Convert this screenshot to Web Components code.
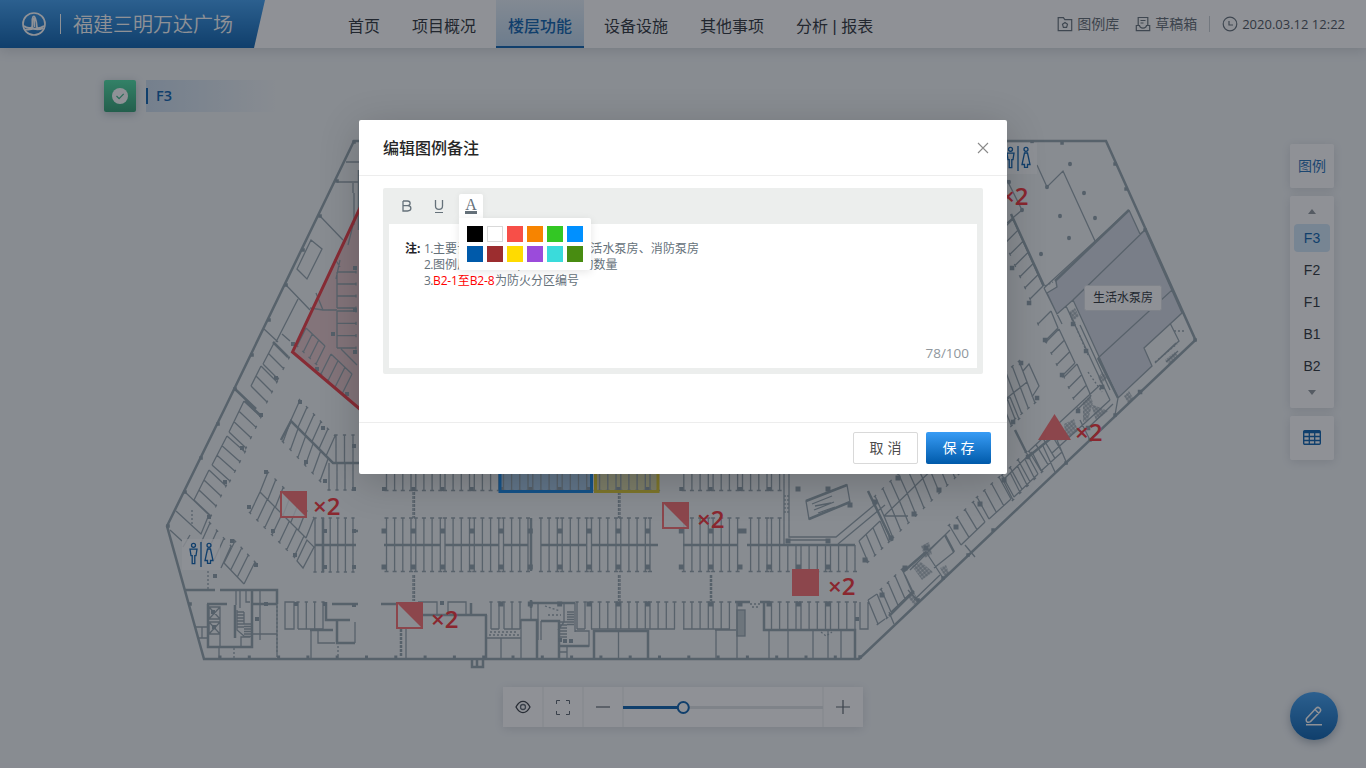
<!DOCTYPE html>
<html lang="zh-CN">
<head>
<meta charset="utf-8">
<title>福建三明万达广场</title>
<style>
html,body{margin:0;height:100%;overflow:hidden}
body{font-family:"Noto Sans CJK SC",sans-serif;color:#30363d}
</style>
</head>
<body>
<floor-app></floor-app>
<script>
const define = (name, html, setup) => {
  const tpl = document.createElement('template');
  tpl.innerHTML = html;
  customElements.define(name, class extends HTMLElement {
    constructor() {
      super();
      this.attachShadow({ mode: 'open' }).appendChild(tpl.content.cloneNode(true));
    }
    connectedCallback() { if (setup) setup(this.shadowRoot, this); }
  });
};

define('brand-title', `<style>
:host{display:flex;align-items:center;box-sizing:border-box;width:265px;height:48px;padding-left:22px;color:#fff;
 background:linear-gradient(#389cf0,#005aaa);clip-path:polygon(0 0,265px 0,254px 48px,0 48px)}
i{width:1px;height:20px;background:#fff;margin:0 12px 0 14px}
span{font-size:20px;line-height:48px;font-weight:350;height:48px}
</style>
<svg width="24" height="24" viewBox="0 0 24 24" fill="none" stroke="#fff" stroke-width="1.7"><circle cx="12" cy="12" r="11"/><path d="M2 14c3 2.500 5 2 7.500 1.500 2 0 2 1.500 3.500 1s5 .5 9-2.500M3 17.500c3 .8 5-.5 8-.5s6 1.500 10-1M10 15.500c1-4.500-.5-8 1-10.500s3.500 3 4 10.500M12 6l.5 9"/></svg>
<i></i><span><slot></slot></span>`);

define('nav-item', `<style>
:host{display:block;box-sizing:border-box;height:48px;padding:0 12px;font:16px/54px "Liberation Sans","Noto Sans CJK SC",sans-serif;white-space:nowrap;color:#252b31}
:host([active]){background:linear-gradient(#e6f0f8,#bad5ec);border-bottom:2px solid #005aaa;color:#005aaa;font-weight:500}
</style><slot></slot>`);

define('status-link', `<style>
:host{display:flex;align-items:center;gap:4px;height:20px;font:14px/18px "Noto Sans CJK SC",sans-serif;color:#5b646c}
:host([latin]){font:13px/20px "Open Sans",sans-serif;color:#454d55}
::slotted(svg){width:16px;height:16px;fill:none;stroke:#5f6b74;stroke-width:1.2}
.t{height:20px}
</style><slot name="icon"></slot><div class="t"><slot></slot></div>`);

define('app-header', `<style>
:host{display:flex;height:48px;background:#fff;box-shadow:0 2px 12px rgba(0,20,40,.16);position:relative}
nav{display:flex;gap:8px;margin-left:71px}
.right{display:flex;align-items:center;margin-left:auto;padding-right:21px}
.right>*+*{margin-left:16px}
.right>i{width:1px;height:16px;background:#c7ccd0;margin:0 -4px 0 12px}
</style>
<brand-title>福建三明万达广场</brand-title>
<nav><nav-item>首页</nav-item><nav-item>项目概况</nav-item><nav-item active>楼层功能</nav-item><nav-item>设备设施</nav-item><nav-item>其他事项</nav-item><nav-item>分析 | 报表</nav-item></nav>
<div class="right">
<status-link><svg slot="icon" viewBox="0 0 16 16"><path d="M1.2 1.7h5.2l1.4 2h6.9v11H1.2z"/><path d="M8 6.400l2.500 1.900-.9 3H6.400l-.9-3z"/></svg>图例库</status-link>
<status-link><svg slot="icon" viewBox="0 0 16 16"><path d="M3.200 9V1.500h9.600V9M5.500 4.500h5M5.500 7h3M1.300 14.600V9.500h3.200c.4 3.500 6.600 3.500 7 0h3.200v5.100z"/></svg>草稿箱</status-link>
<i></i>
<status-link latin><svg slot="icon" viewBox="0 0 16 16"><circle cx="8" cy="8" r="6.800"/><path d="M7 5v4h4"/></svg>2020.03.12 12:22</status-link>
</div>`);

define('floor-crumb', `<style>
:host{display:flex;align-items:center;gap:10px}
b{display:grid;place-items:center;width:32px;height:32px;border-radius:2px;background:linear-gradient(#46dfa0,#289a6c);box-shadow:0 2px 8px rgba(0,30,50,.25)}
p{display:flex;align-items:center;gap:8px;margin:0;width:130px;height:32px;background:linear-gradient(90deg,#cadced,rgba(220,230,240,0));color:#005aaa;font:600 14.500px/32px "Open Sans",sans-serif}
p:before{content:"";width:2px;height:16px;background:#005aaa}
</style>
<b><svg width="16" height="16"><circle cx="8" cy="8" r="8" fill="#fff"/><path d="M4.500 8l2.600 2.600 4.600-4.700" fill="none" stroke="#37b584" stroke-width="1.300"/></svg></b><p><slot></slot></p>`);

define('side-card', `<style>
:host{display:flex;flex-direction:column;align-items:center;justify-content:center;box-sizing:border-box;width:44px;min-height:44px;background:#fff;border-radius:2px;box-shadow:0 2px 10px rgba(0,20,40,.12);font-size:14px;color:#1668b3}
:host([label]){padding-bottom:2px}
</style><slot></slot>`);

define('floor-list', `<style>
:host{display:flex;flex-direction:column;align-items:center;gap:4px;padding:12px 0;font:14px/28px "Liberation Sans",sans-serif;color:#252b31}
span{width:36px;height:28px;text-align:center;border-radius:4px}
.on{background:#cfe6f8;color:#005aaa}
svg{width:8px;height:8px;fill:#8a9299}svg:first-of-type{margin-bottom:4px}svg:last-of-type{margin-top:4px}
</style>
<svg viewBox="0 0 8 8"><path d="M0 6l4-5 4 5z"/></svg><span class="on">F3</span><span>F2</span><span>F1</span><span>B1</span><span>B2</span><svg viewBox="0 0 8 8"><path d="M0 2l4 5 4-5z"/></svg>`);

define('zoom-bar', `<style>
:host{display:grid;grid-template-columns:39px 38px 38px 198px 39px;width:360px;height:40px;gap:2px;border-radius:2px;background:#f2f4f5}
div{background:#fff;display:grid;place-items:center}
.track{justify-content:start}.track svg{margin-left:-1px}
div:last-child svg{margin-right:1px}div:first-child svg{margin-left:1px}
svg{fill:none;stroke:#555f68}
</style>
<div><svg width="16" height="14" viewBox="0 0 16 14" stroke-width="1.300"><path d="M1 7c4-7.500 10-7.500 14 0-4 7.500-10 7.500-14 0z" stroke="#30363d"/><circle cx="8" cy="7" r="2.500"/></svg></div>
<div><svg width="16" height="16" viewBox="0 0 16 16"><path d="M1.500 5V1.500H5M11 1.500h3.500V5M14.500 12v3.500H11M5 15.500H1.500V12"/></svg></div>
<div><svg width="14" height="2"><path d="M0 1h14" stroke-width="1.200"/></svg></div>
<div class="track"><svg width="200" height="16"><path d="M0 8.500h200" stroke="#dfe2e4" stroke-width="3"/><path d="M0 8.500h60" stroke="#005aaa" stroke-width="3"/><circle cx="60.300" cy="8.500" r="5.500" fill="#fff" stroke="#005aaa" stroke-width="2"/></svg></div>
<div><svg width="14" height="14"><path d="M0 7h14M7 0v14" stroke-width="1.200"/></svg></div>`);

define('round-action', `<style>
:host{display:grid;place-items:center;width:48px;height:48px;border-radius:50%;background:linear-gradient(#389cf0,#005aaa);box-shadow:0 3px 8px rgba(0,30,60,.3)}
</style><svg width="18" height="20" viewBox="0 0 18 20" fill="none" stroke="#fff" stroke-width="1.500"><path d="M1.500 12.500L11 2.200c2.500-2.200 6 1 4 3.600L5.500 15.600c-3 1.500-5 .3-4-3.100zM10 3.500l4 4M1 18.700h16"/></svg>`);

/* ---- floor plan, drawn in page coordinates ---- */
define('floor-plan', `<style>
:host{display:block;width:1366px;height:768px}
svg{display:block}
.w{fill:none;stroke:#90a0a8;stroke-width:1.3}.h{fill:none;stroke:#8fa0a8;stroke-width:2.500}
.p{fill:#8b9da6}.mk{fill:#f9686a}.n{font:600 24px "Open Sans",sans-serif;fill:#f52a30}
.lb{font:12px "Noto Sans CJK SC",sans-serif;fill:#252b31}
</style>
<svg width="1366" height="768" viewBox="0 0 1366 768">
<defs>
<g id="wc"><rect width="38" height="31" fill="#fff" fill-opacity=".75"/><g fill="none" stroke="#005aaa" stroke-width="1.300"><circle cx="11.500" cy="6.300" r="2"/><path d="M8 10.200h7l-1 6.500h-1.200v8h-2.600v-8H9zM19 3v25"/><circle cx="27" cy="6.300" r="2"/><path d="M25.500 10h3l2.500 11.500h-2.500v2.800h-3v-2.800H23z"/></g></g>
<g id="half"><rect x="1" y="1" width="25" height="25" fill="#f5f6f8" fill-opacity=".8" stroke="#f9686a" stroke-width="2"/><path d="M0 0h27v27z" class="mk"/></g>
<pattern id="hatch" width="3" height="3" patternUnits="userSpaceOnUse" patternTransform="rotate(-40)"><path d="M0 1h3M1 0v3" stroke="#8e9da5" stroke-width="1"/></pattern>
</defs>
<path d="M1129 210L1140 234L1145 230L1182 313L1144 348L1152 366L1118 398L1073 300L1057 314L1047 293L1056 287L1055 281Z" fill="#d3d8e2"/>
<path d="M499 440H592V492H499Z" fill="#a5c8e6"/><path d="M595 440H658V492H595Z" fill="#dbd8a4"/>
<path d="M292 352L375 176L420 460Z" fill="#e4b8bc" fill-opacity=".8"/>
<g id="plan"></g>
<path d="M500 440V491.500H591.500V440" fill="none" stroke="#0a82e6" stroke-width="3"/><path d="M595.500 440V491.500H658V440" fill="none" stroke="#dcc828" stroke-width="3"/>
<path d="M375 176L292.500 352L420 460" fill="none" stroke="#ee343c" stroke-width="3"/>
<use href="#half" x="280" y="491"/><use href="#half" x="662" y="502"/><use href="#half" x="396" y="602"/>
<rect x="792" y="569" width="27" height="27" class="mk"/><path d="M1054.500 414L1071 440H1038Z" class="mk"/>
<use href="#wc" x="182" y="539"/><use href="#wc" x="999" y="143"/>
<g class="n"><text x="313" y="515">×2</text><text x="697" y="528">×2</text><text x="828" y="595">×2</text><text x="431" y="628">×2</text><text x="1075" y="441">×2</text><text x="1001" y="205">×2</text></g>
<rect x="1084.500" y="285.500" width="77" height="25" rx="2" fill="#fff" stroke="#dfe2e6"/><text x="1093" y="302" class="lb">生活水泵房</text>
</svg>`, root => {
  let W = '', H = '', P = '', extra = '';
  const f = v => v.toFixed(1);
  const ln = (x, y, u, v) => { W += `M${f(x)} ${f(y)}L${f(u)} ${f(v)}`; };
  const poly = s => { W += s; }, heavy = s => { H += s; };
  const dot = (x, y, s = 4) => { P += `M${f(x - s / 2)} ${f(y - s / 2)}h${s}v${s}h${-s}z`; };
  const comb = (ax, ay, bx, by, n, dx, dy, spine = true) => {
    const ux = (bx - ax) / n, uy = (by - ay) / n, L = Math.hypot(ux, uy);
    if (spine) ln(ax, ay, bx, by);
    for (let i = 0; i <= n; i++) {
      const x = ax + ux * i, y = ay + uy * i;
      ln(x, y, x + dx, y + dy);
      ln(x + dx - ux / L * 1.600, y + dy - uy / L * 1.600, x + dx + ux / L * 1.600, y + dy + uy / L * 1.600);
    }
  };
  const bays = (pillars, x0, x1, y0, y1, ticks) => {
    for (const p of pillars) for (const o of [2.500, 10.600, 18.800, 27]) {
      const x = p + o;
      if (x < x0 || x > x1) continue;
      ln(x, y0, x, y1);
      for (const t of ticks) ln(x - 2, t, x + 2, t);
    }
  };
  // perimeter
  heavy('M354 141H1106L1195.500 340L859 659H204L167 526L224 410Z');
  for (let x = 220; x < 850; x += 29.300) dot(x, 657, 3);
  for (const [x, y] of [[354,142],[337,181],[320,216],[303,250],[286,285],[269,320],[252,355],[235,389],[218,424],[201,458],[185,492],[168,526],[190,604],[1115,164],[1126,189],[1145,230],[1195,340],[1115,415],[1090,440],[1066,463],[993,530],[968,555],[943,578],[918,600],[860,657],[1062,143],[1032,142]]) dot(x, y, 3.500);
  // west wing
  poly('M346 162H359M337 182H359M354 193V225M320 216L343 240M311 240L322 249L307 279L297 269ZM286 285L310 310M298 299L276 342M264 329L278 342M282 334L290 341M335 259L340 267M245 401L262 417M185 492L209 515M176 511L201 534L208 517M170 530L182 541M190 535L183 547M316 293L323 310H337M353 225L348 245M353 193v-10');
  heavy('M273 342L288 357M235 389L256 409M245 401L260 415M359 170v60');
  comb(274,343,263,364,2,15,15); comb(261,366,251,386,2,16,16);
  comb(244,401,229,432,3,17,16); comb(227,436,212,465,3,18,16); comb(209,470,194,500,3,17,16);
  comb(224,563,244,584,3,11,-22); comb(200,545,221,568,3,10,-22,false); comb(260,492,306,538,6,8,-20); comb(260,492,304,536,6,-10,21,false);
  poly('M307 540L297 561L303 568L314 547Z');
  heavy('M281 440L291 421L333 463H359');
  comb(291,420,326,456,5,9,-20,false); comb(291,420,328,459,5,-8,22,false);
  comb(336,463,353,463,2,0,-28,false); comb(329,463,353,463,3,0,27,false);
  comb(337,272,337,308,3,19,0); comb(337,311,337,348,3,19,0);
  comb(306,328,325,346,3,-9,18); comb(331,354,352,374,3,-10,20); poly('M341 349L357 365M340 260L336 279M310 308L323 310');
  for (const [x,y] of [[300,402],[323,428],[306,462],[266,472],[249,507],[273,531],[295,555],[261,415],[242,448],[225,482],[209,517],[232,541],[256,565],[215,576],[354,446],[354,489],[276,378],[293,344],[355,268],[355,310],[355,352],[317,369],[347,394],[333,334],[325,531],[325,567],[354,531],[354,567],[325,481]]) dot(x,y);
  comb(315,545,353,545,5,0,-27); comb(315,545,353,545,5,0,27,false); heavy('M323 518V572M315 545H356M355 531H358');
  // central parking rows
  const A = [384,413.300,442.500,471.800,501], B = [530.300,559.700,589,618.300,647.500], C = [681.300,710.600,740,769,798.500,828];
  bays([...A,...B], 384, 660, 474, 490, [490.500]); bays(C, 682, 784, 474, 490, [490.500]);
  bays(A, 384, 528, 518, 571, [518,571.500]); bays(B, 540, 658, 518, 571, [518,571.500]);
  bays(C, 682, 739, 518, 571, [518,571.500]); bays(C, 746, 783, 518, 545, [518]); bays(C, 746, 857, 545, 571, [571.500]);
  heavy('M384 545H440M445 545H499M503 545H528M541 545H586M591 545H658M683 545H738M747 545H855M531 518V571');
  for (const p of [...A,...B,...C]) { dot(p,489); if (p<750) dot(p,531,5); dot(p,567,5); if (p>700||(p>500&&p<650)) dot(p,604,5); }
  for (const x of [413,618.500]) extra += `<path class="w" stroke-dasharray="3 1" d="M${x} 492v26M${x} 575v26M${x+1.500} 492v26M${x+1.500} 575v26"/>`;
  extra += '<path class="h" stroke-dasharray="3 1" d="M711 575V601M401 629V657"/>';
  // south-west rooms
  heavy('M185 590H215M220 590H277V604M207 604H227M208 604V647H252V590M235 605V638M252 604H277M310 630H333M326 602V620H350M332 604H358M337 620V643H355M381 604H396M423 615H487M486 615V658');
  poly('M277 604V657M252 634H277M260 591V640M236 591V605M195 627H207M197 638H207M202 627V638M220 607V646M355 622V643M311 631V658M318 631V643H335M209 607h11v12h-11zM209 607l11 12M220 607l-11 12M209 622h11v12h-11zM209 622l11 12M220 622l-11 12M240 590v18M246 590v12h4M241 646v-9h9M207 634h13M219 646v12');
  for (let i = 0; i < 6; i++) poly(`M237 ${612+i*3}h7M244 ${624+i*2.500}h7M567 ${612+i*2.500}h7M560 ${622+i*3}h7`);
  poly('M237 610V630L244 636M244 612V624M285 602H294V629H285ZM418 602H437V615M448 614V602H466V614M406 629V658M521 658V620H537V658M487 638H521M501 638V658M531 604V620M538 603V640M575 603V632M559 646H589V631H575M567 646V658M559 652H567M541 621V640M564 604v18l-6 8');
  comb(298,629,323,629,3,0,-27); comb(491,629,499,629,1,0,-27); comb(504,629,520,629,2,0,-27); comb(577,629,585,629,1,0,-27);
  heavy('M521 620H537V658M531 603H575M541 621H559V658M471 603V614M559 646H589M594 658V631H648V658M735 602H750M760 602H770M764 602V630H855V658M472 659V667H483V659M477 660v7M531 600v8');
  bays([589,618.300,647.500], 590, 676, 602, 629, [602]); bays(C, 682, 732, 602, 629, [602]); bays(C, 769, 857, 602, 629, [602]);
  poly('M591 629H675M683 629H730M715 630H736M716 630V658M737 602V658M618.500 630V658M769 630V658M788 630V658M813 630V658M828 630V658M841 630V658M860 602V629H868V602');
  extra += '<rect x="737" y="610" width="8" height="26" fill="#8fa0a8" fill-opacity=".55"/><rect x="737" y="610" width="8" height="26" fill="url(#hatch)" class="w"/><path class="w" stroke-dasharray="2 2" d="M489 635h30M490 632h27M277 606v48M338 646v12M545 606l15 5M548 615h13M821 632l5 4 6-4M750 604h10M752 607h8M208 571v20M192 510v14M234 648v10M785 495v18M788 495v18"/>';
  for (const [x,y] of [[296,604],[325,604],[354,605],[442,603],[266,604],[560,640],[565,641],[571,641],[213,612],[214,627],[257,619],[857,619]]) dot(x,y);
  // ramp and south-east diagonal
  poly('M784 474V545M789 474V537H836L878 502M838 544L885 505M790 540H830M806 501L847 485L850 502L809 519ZM885 516H908M812 504l20-8M814 510l20-8M815 506l16-3M818 513l17-6');
  heavy('M868 491L892 541M806 501L847 485M809 519L850 502M784 545H838');
  comb(859,541,880,521,3,9,21);
  comb(884,516,946,456,8,-9,-20); comb(884,516,946,456,8,9,22,false); comb(950,452,1010,397,8,9,22);
  comb(868,600,877,594,1,10,24); comb(891,612,912,592,3,-10,-23); poly('M878 624L885 619');
  comb(961,545,985,522,3,-12,-20); comb(989,519,1011,499,3,-12,-22); comb(1014,497,1038,474,3,-12,-22); comb(1041,471,1062,452,3,-12,-20);
  heavy('M889 616L914 591M903 572L926 552M945 535L954 552');
  poly('M905 575L914 594M926 552L943 578M914 600L940 575M889 612L894 624M910 570L950 530M934 568L954 552M945 535L928 551M917 600L908 590M965 545l10 12');
  extra += '<path fill="url(#hatch)" d="M912 566L921 562L933 572L922 580ZM921 546l8-4 3 12-7 4zM907 596l6-5 6 10-5 4zM940 568l6-3 3 8-4 4z"/>';
  for (const [x,y] of [[898,478],[914,514],[939,490],[875,502],[850,505],[865,560],[891,538],[882,595],[956,527],[980,504],[1004,480],[926,548],[905,568],[798,489],[828,489],[744,531],[788,541],[828,541]]) dot(x,y,5);
  // east wing
  poly('M1037 165L1047 187L1063 171L1095 241M1007 180L1022 210L1007 223M1129 210L1044 288M1129 210L1140 234L1145 230L1073 300L1118 398L1152 366L1144 348L1182 313L1172 290L1098 358M1056 281L1057 287L1047 293L1057 314L1073 300M1066 306L1110 400M1080 325l30 65M1170 323L1179 341L1155 363M1182 313L1145 230M1044 288L1062 324M1110 400L1052 453M1100 385L1030 450M1118 398L1115 415M1090 440L1080 420M1113 404L1088 428M1043 446L1055 472M1057 440L1067 464M1158 360l18-17M1166 362l12-11');
  heavy('M1011 214L1044 286M1129 210L1055 281M1098 358L1118 398M1015 430L1026 452M1028 457L1050 439');
  comb(1013,219,1043,286,6,-13,13); comb(1051,311,1058,328,1,-13,13); comb(1059,329,1075,363,3,-13,13); comb(1077,364,1091,396,3,-13,13);
  comb(1007,398,1027,382,3,-8,-21); comb(1007,398,1027,382,3,8,21,false); poly('M1023 371L1029 364L1039 386L1032 397');
  comb(1032,452,1003,480,4,10,20);
  extra += '<path fill="url(#hatch)" d="M1083 402L1090 396L1093 402L1088 420L1083 422ZM1091 404L1108 411L1096 421ZM1098 377l5-5 4 6-6 6zM1069 312l6-4 4 8-7 6zM1124 396l5-5 4 7-5 5zM1064 424l10-5 4 12-12 8zM1165 360l10-8 3 4-9 8z"/><path class="w" stroke-dasharray="2 2" d="M1155 362l22-18M1174 331h12M1045 286l8-4M1088 372l14 20M1070 313l18 42"/>';
  for (const [x,y] of [[1070,164],[1084,193],[1060,216],[1095,218],[1069,238],[1041,254],[1047,187],[1022,210],[1012,268],[1029,303],[1045,340],[1062,375],[1078,411],[1073,324],[1086,351],[1102,387],[1021,363],[1037,398],[1013,422],[1028,457],[1140,392],[1009,182],[1060,438],[1088,428]]) { if (x < 1100 && y < 262) P += `M${x-2} ${y}a2 2.200 0 1 0 4 0a2 2.200 0 1 0 -4 0`; else dot(x,y,4.500); }
  root.getElementById('plan').innerHTML = `<path class="w" d="${W}"/><path class="h" d="${H}"/><path class="p" d="${P}"/>${extra}`;
});

define('color-palette', `<style>
:host{display:grid;grid-template-columns:repeat(6,16px);gap:4px;padding:8px;background:#fff;border-radius:0 2px 2px 2px;box-shadow:0 2px 8px rgba(0,0,0,.1)}
i{width:16px;height:16px;box-sizing:border-box}
</style>`, root => {
  for (const c of ['#000','#fff','#f74f48','#f78400','#33c724','#0090ff','#005aaa','#9c2d2f','#ffdb00','#9b4bdb','#3adbdb','#488c11']) {
    const i = document.createElement('i');
    i.style.background = c;
    if (c === '#fff') i.style.border = '1px solid #d9d9d9';
    root.appendChild(i);
  }
});

define('note-editor', `<style>
:host{display:flex;flex-direction:column;box-sizing:border-box;width:600px;height:186px;padding:0 6px 6px;border-radius:2px;background:#eceeed}
.bar{display:flex;gap:8px;height:30px;padding:6px 0 0 6px}
.bar>div{position:relative;display:grid;place-items:center;width:24px;height:24px}
.bar .on{background:#fff;border-radius:2px 2px 0 0;box-shadow:0 0 6px rgba(0,0,0,.06)}
svg{fill:none;stroke:#65717a;stroke-width:1.300}
.a{font:16px/16px "Liberation Serif",serif;color:#65717a;border-bottom:3px solid #65717a;height:12px;width:12px;display:flex;justify-content:center;align-items:center}
color-palette{position:absolute;left:0;top:24px;z-index:2}
.text{flex:1;display:flex;flex-direction:column;justify-content:space-between;background:#fff;padding:17px 8px 5px 16px;font:12px/16px "Open Sans","Noto Sans CJK SC",sans-serif;color:#65717a}
.note{display:flex}.note b{width:19px;color:#1f2429;font-weight:700;white-space:nowrap}
.note p{margin:0;white-space:nowrap}.note p span{display:inline-block;width:9px;letter-spacing:-.5px}
u{text-decoration:none;letter-spacing:.1px}
em{font-style:normal;color:#f00;display:inline-block;width:62px;letter-spacing:-.12px}
.count{text-align:right;font-size:13.500px;line-height:20px;color:#90979d}
</style>
<div class="bar">
<div><svg width="10" height="12" viewBox="0 0 10 12"><path d="M1 1h4.500c3.500 0 3.500 4.700 0 4.700H1M5.500 5.700c4.500 0 4.500 5.300 0 5.300H1V1"/></svg></div>
<div><svg width="10" height="14" viewBox="0 0 10 14"><path d="M1.500 1v6c0 4.500 7 4.500 7 0V1"/><path d="M1 13.500h8" stroke-width="1"/></svg></div>
<div class="on"><span class="a">A</span><color-palette></color-palette></div>
</div>
<div class="text"><div class="note"><b>注:</b><p><span>1.</span><u>主要设备用房、配电机房、生活水泵房、消防泵房</u><br><span>2.</span><u>图例后面的数字,表示该设备的数量</u><br><span>3.</span><em>B2-1至B2-8</em>为防火分区编号</p></div>
<div class="count">78/100</div></div>`);

define('ui-button', `<style>
:host{display:block;box-sizing:border-box;width:65px;height:32px;border:1px solid #d9d9d9;border-radius:2px;background:#fff;font-size:14px;line-height:28px;text-align:center;letter-spacing:4px;text-indent:4px;color:#4d4d4d}
:host([primary]){border:0;line-height:30px;background:linear-gradient(#389cf5,#005aaa);color:#fff}
</style><slot></slot>`);

define('modal-dialog', `<style>
:host{display:flex;flex-direction:column;width:648px;height:354px;background:#fff;border-radius:2px;box-shadow:0 8px 40px rgba(0,0,0,.2)}
header{display:flex;align-items:center;justify-content:space-between;height:55px;padding:0 18px 0 24px;border-bottom:1px solid #ededed;font-size:16px;line-height:54px;font-weight:500;color:#262626}
header div{height:56px}
main{flex:1;padding:12px 24px 0}
footer{display:flex;justify-content:flex-end;gap:8px;height:42px;padding:9px 16px 0 0;border-top:1px solid #ededed}
</style>
<header><div><slot name="title"></slot></div><svg width="12" height="12" fill="none" stroke="#8a8a8a" stroke-width="1.100"><path d="M1 1l10 10M11 1L1 11"/></svg></header>
<main><slot></slot></main><footer><slot name="actions"></slot></footer>`);

define('floor-app', `<style>
:host{display:flex;flex-direction:column;position:relative;width:1366px;height:768px;background:#f0f4f5;overflow:hidden}
floor-plan{position:absolute;left:0;top:0}
.stage{flex:1;position:relative;display:grid;grid-template-columns:1fr 48px;grid-template-rows:32px 1fr 48px;padding:32px 28px 28px 104px;box-sizing:border-box}
aside{display:flex;flex-direction:column;gap:8px;padding-top:32px;grid-column:2;grid-row:2}
zoom-bar{grid-column:1;grid-row:3;margin:-5px 0 0 399px;box-shadow:0 2px 10px rgba(0,20,40,.12)}
round-action{grid-column:2;grid-row:3}
.mask{position:absolute;inset:0;background:rgba(32,35,45,.5);display:flex;justify-content:center;align-items:flex-start;padding-top:120px}
</style>
<floor-plan></floor-plan>
<app-header></app-header>
<div class="stage"><floor-crumb>F3</floor-crumb>
<aside><side-card label>图例</side-card><side-card><floor-list></floor-list></side-card>
<side-card label><svg width="18" height="15" viewBox="0 0 18 15" fill="none" stroke="#005aaa"><rect x=".7" y=".7" width="16.600" height="13.600" rx="1" stroke-width="1.400"/><path d="M1 2h16" stroke-width="2.500"/><path d="M1 6.500h16M1 10.500h16M6.300 3v11M11.700 3v11" stroke-width="1.300"/></svg></side-card></aside>
<zoom-bar></zoom-bar><round-action></round-action></div>
<div class="mask"><modal-dialog><span slot="title">编辑图例备注</span><note-editor></note-editor><ui-button slot="actions">取消</ui-button><ui-button slot="actions" primary>保存</ui-button></modal-dialog></div>`);
</script>
</body>
</html>
